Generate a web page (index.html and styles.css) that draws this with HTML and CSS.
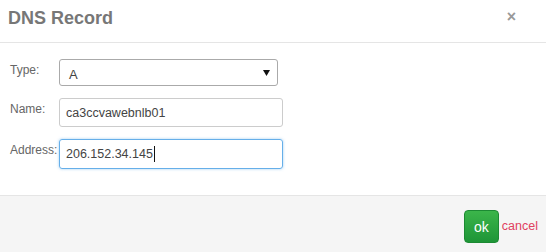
FILE: index.html
```html
<!DOCTYPE html>
<html lang="en">
<head>
    <meta charset="UTF-8">
    <title>DNS Record</title>
    <link rel="stylesheet" href="styles.css">
</head>
<body>
    <div class="modal">
        <div class="modal-header">
            <h3 class="modal-title">DNS Record</h3>
            <span class="close">&times;</span>
        </div>

        <div class="modal-body">
            <div class="form-row">
                <label>Type:</label>
                <div class="select-box">
                    <span>A</span>
                    <svg class="caret" width="7" height="6" viewBox="0 0 7 6">
                        <path d="M0 0 L7 0 L3.5 6 Z" fill="#111"/>
                    </svg>
                </div>
            </div>
            <div class="form-row">
                <label>Name:</label>
                <div class="text-input">ca3ccvawebnlb01</div>
            </div>
            <div class="form-row">
                <label>Address:</label>
                <div class="text-input focused">206.152.34.145<span class="cursor"></span></div>
            </div>
        </div>

        <div class="modal-footer">
            <button class="btn-ok">ok</button>
            <a class="cancel" href="#">cancel</a>
        </div>
    </div>
</body>
</html>
```

FILE: styles.css
```css
body, html {
    margin: 0;
    padding: 0;
    background: #fff;
    font-family: "Liberation Sans", Arial, sans-serif;
}

.modal {
    width: 546px;
    height: 252px;
    display: flex;
    flex-direction: column;
}

.modal-header {
    height: 43px;
    box-sizing: border-box;
    padding: 7px 8px 0 8px;
    border-bottom: 1px solid #e5e5e5;
    display: flex;
    justify-content: space-between;
    align-items: flex-start;
}

.modal-title {
    margin: 0;
    font-size: 18px;
    line-height: 22px;
    font-weight: bold;
    color: #777;
}

.close {
    margin: 1px 22px 0 0;
    font-size: 16px;
    line-height: 18px;
    font-weight: bold;
    color: #999;
}

.modal-body {
    padding: 16px 10px 26px 10px;
    display: flex;
    flex-direction: column;
    gap: 12px;
}

.form-row {
    display: flex;
    align-items: flex-start;
}

.form-row label {
    width: 49px;
    padding-top: 4px;
    font-size: 12px;
    line-height: 14px;
    color: #666;
}

.select-box {
    width: 219px;
    height: 27px;
    box-sizing: border-box;
    border: 1px solid #aaa;
    border-radius: 3px;
    padding: 0 7px 0 9px;
    display: flex;
    align-items: center;
    justify-content: space-between;
    font-size: 13px;
    color: #444;
}

.select-box span {
    margin-top: 3px;
}

.text-input {
    width: 224px;
    height: 29px;
    box-sizing: border-box;
    border: 1px solid #ccc;
    border-radius: 3px;
    padding: 0 6px;
    display: flex;
    align-items: center;
    font-size: 12.5px;
    color: #444;
}

.text-input.focused {
    height: 30px;
    border-color: #66afe9;
    box-shadow: 0 0 3px rgba(102, 175, 233, 0.6);
}

.cursor {
    display: inline-block;
    width: 1px;
    height: 16px;
    background: #111;
    margin-left: 1px;
}

.modal-footer {
    flex: 1;
    background: #f5f5f5;
    border-top: 1px solid #e5e5e5;
    padding: 14px 8px 0 0;
    display: flex;
    justify-content: flex-end;
    align-items: flex-start;
}

.btn-ok {
    width: 35px;
    height: 33px;
    border: 1px solid #1c8a33;
    border-radius: 4px;
    background: linear-gradient(#3bb54a, #1e9537);
    color: #fff;
    font-family: "Liberation Sans", Arial, sans-serif;
    font-size: 14px;
    padding: 0;
    margin-right: 3px;
}

.cancel {
    margin-top: 9px;
    font-size: 12.5px;
    color: #e0415f;
    text-decoration: none;
}
```
